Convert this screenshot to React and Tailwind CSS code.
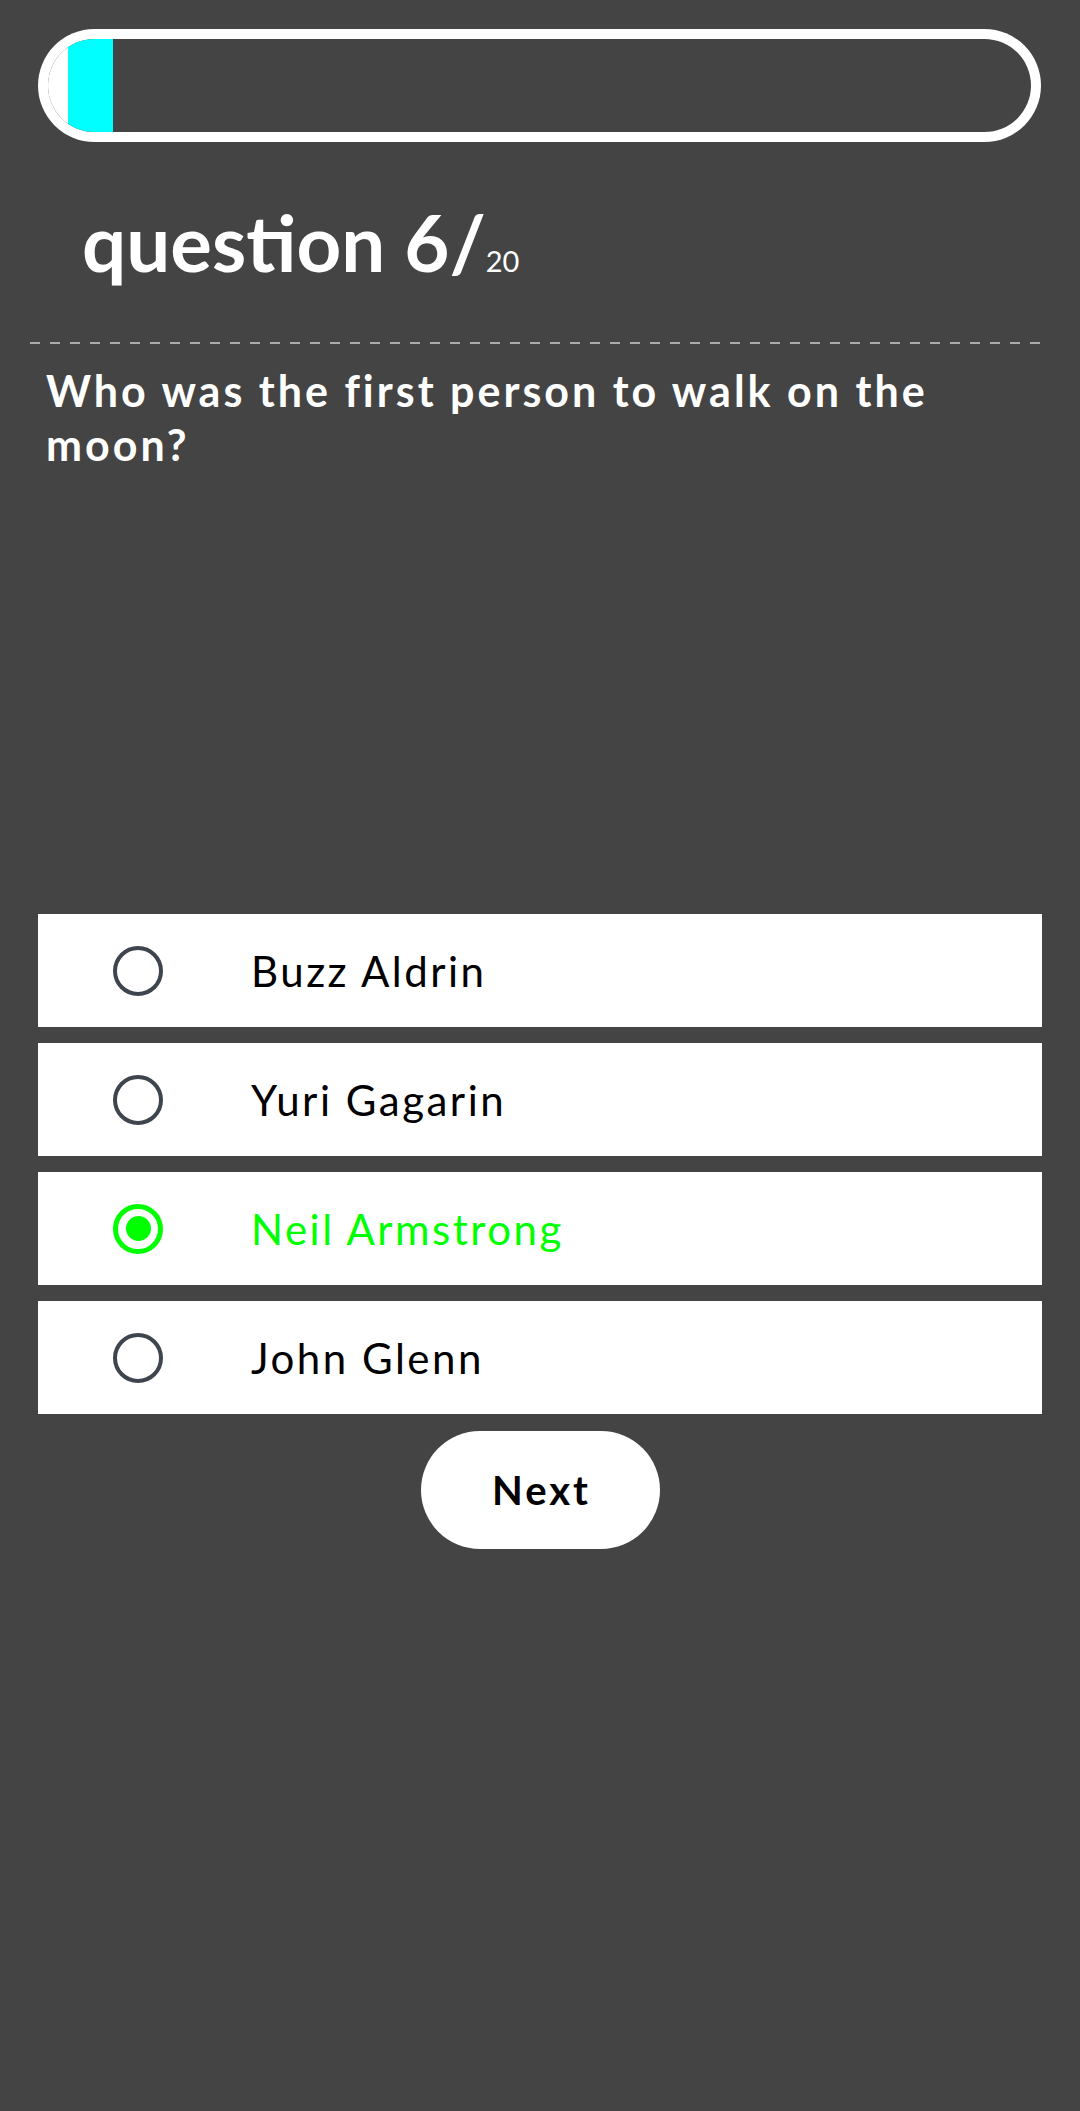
const options = [
  { id: 'a', label: 'Buzz Aldrin' },
  { id: 'b', label: 'Yuri Gagarin' },
  { id: 'c', label: 'Neil Armstrong' },
  { id: 'd', label: 'John Glenn' },
]

function ProgressBar() {
  return (
    <div className="pt-[29px] px-[38px]">
      <div className="h-[113px] w-[1003px] rounded-full bg-white p-[10px]">
        <div className="flex h-full overflow-hidden rounded-full bg-[#444444]">
          <div className="w-[20px] bg-white" />
          <div className="w-[45px] bg-[#00ffff]" />
        </div>
      </div>
    </div>
  )
}

function Option({ label, selected }) {
  return (
    <div className="flex h-[113px] items-center bg-white">
      {selected ? (
        <div className="ml-[75px] flex h-[50px] w-[50px] shrink-0 items-center justify-center rounded-full border-[5px] border-[#00ff00]">
          <div className="h-[25px] w-[25px] rounded-full bg-[#00ff00]" />
        </div>
      ) : (
        <div className="ml-[75px] h-[50px] w-[50px] shrink-0 rounded-full border-4 border-[#3e454e]" />
      )}
      <span className={`ml-[88px] text-[42px] leading-none tracking-[2.5px] ${selected ? 'text-[#00ff00]' : 'text-black'}`}>
        {label}
      </span>
    </div>
  )
}

export default function App() {
  const selected = 'c'

  return (
    <div className="min-h-[2111px] bg-[#444444] font-['Lato',sans-serif]">
      <ProgressBar />

      <h1 className="mt-[52px] h-[96px] pl-[82px] text-[78px] font-bold leading-[96px] text-white">
        question 6/<span className="text-[29px] font-normal leading-none">20</span>
      </h1>

      <div className="ml-[30px] mr-[40px] mt-[52px] h-[2px] bg-[linear-gradient(to_right,#aaaaaa_50%,transparent_50%)] bg-[length:20px_2px]" />

      <p className="mt-[20px] w-[1000px] pl-[46px] text-[43px] font-bold leading-[54px] tracking-[3px] text-white">
        Who was the first person to walk on the moon?
      </p>

      <div className="mx-[38px] mt-[442px] flex flex-col gap-[16px]">
        {options.map(o => (
          <Option key={o.id} label={o.label} selected={o.id === selected} />
        ))}
      </div>

      <div className="mt-[17px] flex justify-center">
        <button className="h-[118px] w-[239px] rounded-full bg-white pl-[3px] text-[40px] font-bold tracking-[3px] text-black">
          Next
        </button>
      </div>
    </div>
  )
}
